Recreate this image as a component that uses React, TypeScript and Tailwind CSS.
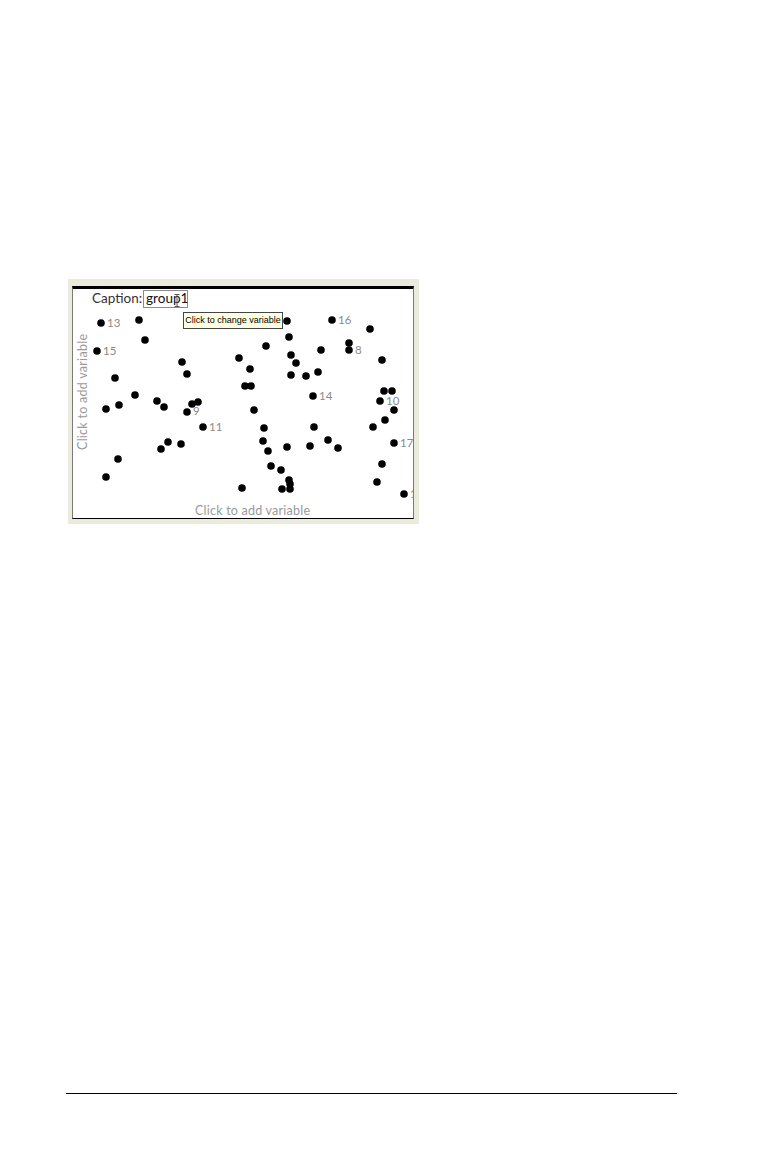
import React from "react";

const dots: [number, number][] = [
  [101, 323], [139, 320], [97, 351], [145, 340], [115, 378], [182, 362], [187, 374],
  [135, 395], [106, 409], [119, 405], [157, 401], [164, 407], [192, 404], [198, 402],
  [187, 412], [203, 427], [168, 442], [161, 449], [181, 444], [118, 459], [106, 477],
  [239, 358], [250, 369], [266, 346], [245, 386], [251, 386], [254, 410], [264, 428],
  [263, 441], [268, 451], [271, 466], [281, 470], [242, 488], [282, 489], [289, 480],
  [290, 484], [290, 489], [287, 321], [289, 337], [291, 355], [296, 363], [291, 375],
  [306, 376], [318, 372], [321, 350], [313, 396], [314, 427], [310, 446], [287, 447],
  [328, 440], [338, 448], [332, 320], [349, 343], [349, 350], [370, 329], [382, 360],
  [384, 391], [392, 391], [380, 401], [394, 410], [385, 420], [373, 427], [394, 443],
  [382, 464], [377, 482], [404, 494],
];

const labels: [string, number, number][] = [
  ["13", 107, 327], ["15", 103, 355], ["16", 338, 324], ["8", 355, 354],
  ["14", 319, 400], ["10", 386, 405], ["9", 193, 415], ["11", 209, 431],
  ["17", 400, 447], ["1", 410, 498],
];

export default function App() {
  return (
    <div className="w-[764px] h-[1160px] bg-white flex flex-col" style={{ fontFamily: "Lato, 'DejaVu Sans', sans-serif" }}>
      <div className="ml-[68px] mt-[279px] w-[351px] h-[245px] bg-[#ebebdd] pl-[4px] pt-[7px] pr-[5px] pb-[5px] flex">
        <div className="relative flex-1 bg-white border-t-[3px] border-t-black border-l border-l-[#7a7a7a] border-r border-r-[#7a7a7a] border-b border-b-black overflow-hidden">
          <svg
            className="absolute inset-0"
            width="340"
            height="229"
            viewBox="73 289 340 229"
          >
            {dots.map(([x, y], i) => (
              <circle key={i} cx={x} cy={y} r={3.8} fill="#000" />
            ))}
            {labels.map(([t, x, y]) => (
              <text key={t} x={x} y={y} fontSize="11.5" fill="#8a8a8a" fontFamily="Lato, 'DejaVu Sans', sans-serif">
                {t}
              </text>
            ))}
            <text
              x={252.5}
              y={515}
              textAnchor="middle"
              fontSize="12.5"
              fill="#9a9a9a"
              textLength={115}
              fontFamily="Lato, 'DejaVu Sans', sans-serif"
            >
              Click to add variable
            </text>
            <text
              x={0}
              y={0}
              transform="translate(87 392) rotate(-90)"
              textAnchor="middle"
              fontSize="12.5"
              fill="#9a9a9a"
              textLength={116}
              fontFamily="Lato, 'DejaVu Sans', sans-serif"
            >
              Click to add variable
            </text>
          </svg>
          {/* Caption */}
          <div className="absolute left-[19px] top-[1px] flex items-center">
            <span className="text-[13.5px] leading-none text-[#333] mr-[1px]">
              Caption:
            </span>
            <div className="relative w-[45px] h-[18px] border border-[#8c8c8c] bg-white flex items-center pl-[2px]">
              <span className="text-[13.5px] leading-none text-[#111]">group1</span>
              <svg className="absolute left-[30px] top-[3px]" width="6" height="13" viewBox="0 0 6 13">
                <path d="M0.5 0.5h5M3 0.5v12M0.5 12.5h5" stroke="#555" strokeWidth="1" fill="none" />
              </svg>
            </div>
          </div>
          {/* Tooltip */}
          <div className="absolute left-[110px] top-[23px] w-[100px] h-[17px] bg-[#ffffe1] border border-[#444] flex items-center justify-center">
            <span className="text-[9px] leading-none text-black whitespace-nowrap" style={{ fontFamily: "'Liberation Sans', sans-serif" }}>
              Click to change variable
            </span>
          </div>
        </div>
      </div>
      <div className="ml-[66px] mt-[569px] w-[611px] h-px bg-black" />
    </div>
  );
}
